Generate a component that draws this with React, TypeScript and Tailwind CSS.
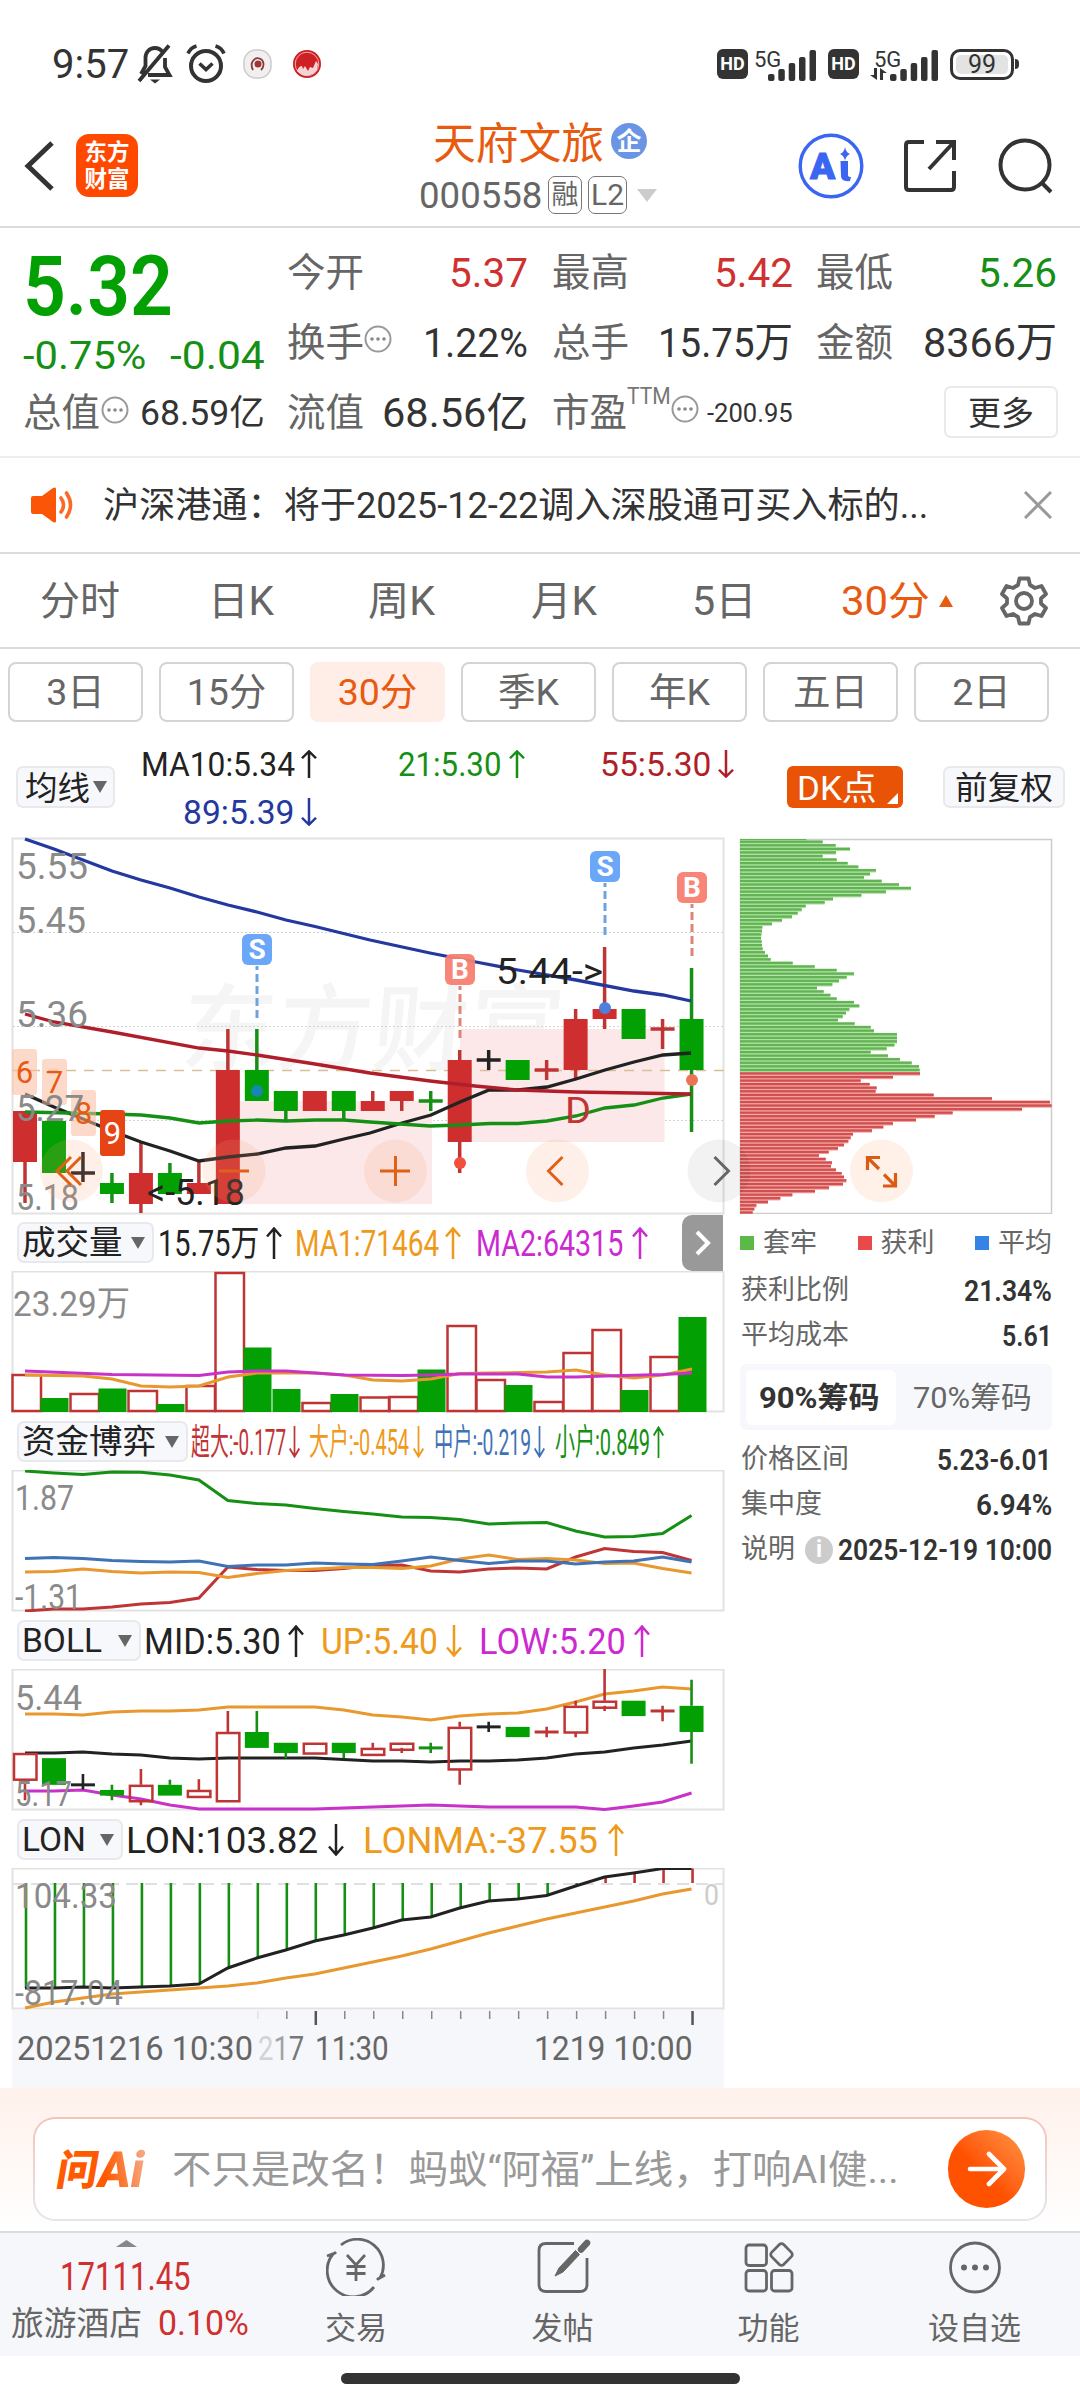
import React, { useLayoutEffect, useRef } from 'react';

const CANDLES = [
  { c: 'r', top: 1111, bot: 1162, hi: 1111, lo: 1203 },
  { c: 'g', top: 1121, bot: 1173, hi: 1121, lo: 1173 },
  { c: 'k', top: 1173, bot: 1173, hi: 1152, lo: 1182 },
  { c: 'g', top: 1183, bot: 1194, hi: 1173, lo: 1203 },
  { c: 'r', top: 1173, bot: 1204, hi: 1142, lo: 1213 },
  { c: 'g', top: 1173, bot: 1194, hi: 1163, lo: 1194 },
  { c: 'r', top: 1183, bot: 1194, hi: 1162, lo: 1194 },
  { c: 'r', top: 1070, bot: 1204, hi: 1029, lo: 1204 },
  { c: 'g', top: 1070, bot: 1101, hi: 1029, lo: 1101 },
  { c: 'g', top: 1091, bot: 1111, hi: 1091, lo: 1121 },
  { c: 'r', top: 1091, bot: 1111, hi: 1091, lo: 1111 },
  { c: 'g', top: 1091, bot: 1111, hi: 1091, lo: 1121 },
  { c: 'r', top: 1101, bot: 1111, hi: 1091, lo: 1111 },
  { c: 'r', top: 1091, bot: 1101, hi: 1091, lo: 1111 },
  { c: 'g', top: 1101, bot: 1101, hi: 1091, lo: 1111 },
  { c: 'r', top: 1060, bot: 1142, hi: 1050, lo: 1173 },
  { c: 'k', top: 1060, bot: 1060, hi: 1050, lo: 1070 },
  { c: 'g', top: 1060, bot: 1080, hi: 1060, lo: 1080 },
  { c: 'r', top: 1070, bot: 1070, hi: 1060, lo: 1080 },
  { c: 'r', top: 1019, bot: 1070, hi: 1009, lo: 1080 },
  { c: 'r', top: 1009, bot: 1019, hi: 947, lo: 1029 },
  { c: 'g', top: 1009, bot: 1039, hi: 1009, lo: 1039 },
  { c: 'r', top: 1029, bot: 1029, hi: 1019, lo: 1049 },
  { c: 'g', top: 1019, bot: 1070, hi: 968, lo: 1132 },
];

const COLORS: Record<string, string> = { r: '#cf2e2e', g: '#02a002', k: '#222222' };
const OUTLINE: Record<string, string> = { r: '#bf3535', g: '#159015', k: '#222222' };

const VOLUMES = [
  1374, 1398, 1393, 1388.5, 1390, 1404, 1385, 1272, 1347.5, 1389, 1402, 1394,
  1396.5, 1396, 1369.5, 1325, 1379, 1385, 1401, 1352, 1329, 1390, 1356, 1317,
];
const VOLUME_COLORS = 'rgrgrgrrggrgrrgrrgrrrgrg';

const FUND = {
  small: [1471, 1473, 1474.5, 1472, 1472.3, 1475, 1480, 1500.5, 1503.5, 1505, 1508.5, 1511.5, 1514, 1517, 1517.5, 1519.5, 1524, 1523, 1522.5, 1531, 1537, 1536.5, 1533.5, 1515.5],
  big: [1572, 1571.5, 1569, 1571.5, 1573, 1572, 1572.5, 1577.5, 1573.5, 1570.5, 1569, 1567.5, 1567.5, 1568.5, 1566, 1559, 1555, 1559.5, 1558.5, 1560, 1563.5, 1563, 1568.5, 1573],
  huge: [1611, 1609, 1609, 1607, 1604, 1602.5, 1598, 1567, 1569.5, 1570.5, 1570.5, 1568.5, 1565.5, 1565, 1571, 1572, 1569, 1568, 1569, 1557, 1548.5, 1551.5, 1552.5, 1560.5],
  mid: [1558.5, 1557.5, 1558.5, 1560.5, 1561.5, 1562, 1561, 1566.5, 1565, 1565, 1563, 1564, 1564.5, 1561, 1557, 1560.5, 1563.5, 1561, 1561, 1564, 1562, 1561, 1557, 1562],
};

const BOLL = {
  up: [1714, 1714, 1715, 1712, 1711, 1711, 1710, 1707, 1707, 1707, 1707, 1710, 1715, 1717, 1720, 1716, 1714, 1713, 1709, 1702, 1694, 1691, 1687, 1689],
  mid: [1753, 1753, 1752, 1754, 1755, 1758, 1759, 1758, 1758, 1758, 1758, 1759.5, 1761, 1761, 1762, 1761, 1761, 1760, 1758, 1754, 1752, 1748, 1745, 1741],
  low: [1791, 1791, 1790, 1795, 1799, 1805, 1809, 1809, 1809, 1809, 1809, 1808, 1807, 1806, 1805, 1806, 1807, 1807, 1807, 1807, 1809.5, 1806, 1802, 1793],
};

const LON = [1988, 1988, 1987, 1988, 1987, 1986, 1984, 1968, 1958, 1950, 1941, 1935, 1928, 1920, 1917, 1908, 1901, 1899, 1895.5, 1886, 1877, 1873, 1868.5, 1868.5];
const LONMA = [2008, 2002, 1998, 1994, 1992, 1990, 1988, 1986, 1983, 1978, 1974, 1968, 1962, 1956, 1949, 1941, 1933, 1926, 1919, 1913, 1907, 1901, 1894, 1889];

const CHIPS_GREEN = [
  259, 308, 347, 390, 348, 308, 350, 383, 415, 468, 450, 432, 485, 537, 573, 498, 424, 339, 314, 257, 245, 233,
  216, 186, 156, 127, 126, 124, 123, 125, 126, 128, 135, 144, 152, 218, 284, 350, 402, 380, 357, 337, 291, 311,
  331, 350, 402, 418, 388, 378, 368, 354, 404, 452, 462, 531, 531, 531, 523, 500, 452, 504, 540, 575, 597, 599,
];
const CHIPS_RED = [
  600, 519, 422, 449, 470, 467, 641, 816, 990, 995, 906, 698, 644, 588, 519, 490, 456, 399, 392, 385, 372, 354,
  326, 297, 317, 336, 333, 348, 365, 372, 379, 369, 327, 285, 217, 181, 144, 109, 103, 98,
];

const xAt = (i: number) => 25 + i * 28.98;
const series = (ys: number[]) => ys.map((y, i) => `${xAt(i)},${y}`).join(' ');

// Squeezes or stretches its text to the width of the box
function Fit({ className, children }: { className: string; children: React.ReactNode }) {
  const box = useRef<HTMLSpanElement>(null);
  const text = useRef<HTMLSpanElement>(null);

  useLayoutEffect(() => {
    if (!box.current || !text.current) return;
    text.current.style.transform = `scaleX(${box.current.offsetWidth / text.current.offsetWidth})`;
  }, []);

  return (
    <span ref={box} className={`inline-flex shrink-0 pt-[2px] leading-none ${className}`}>
      <span ref={text} className="inline-block shrink-0 origin-left whitespace-nowrap">{children}</span>
    </span>
  );
}

function Arrow({ down, className = 'h-8 w-4' }: { down?: boolean; className?: string }) {
  return (
    <svg className={`shrink-0 ${className}`} viewBox="0 0 16 32" fill="none" stroke="currentColor" strokeWidth="2.5" preserveAspectRatio="none">
      {down ? <path d="M8 0v30M1 22.500l7 8 7-8" /> : <path d="M8 32V2M1 9.500l7-8 7 8" />}
    </svg>
  );
}

function Label({ x, y, w, children, fill = '#8a8a8a', size = 37 }: { x: number; y: number; w: number; children: React.ReactNode; fill?: string; size?: number }) {
  return (
    <text x={x - 1} y={y} textLength={w + 2} lengthAdjust="spacingAndGlyphs" fontSize={size} fill={fill} stroke="none">{children}</text>
  );
}

function Frame({ y, h }: { y: number; h: number }) {
  return <rect x="12.500" y={y + 0.5} width="711" height={h} fill="none" stroke="#e2e2e2" strokeWidth="2" />;
}

function Dots({ className = '' }: { className?: string }) {
  return (
    <svg className={`h-7 w-7 shrink-0 ${className}`} viewBox="0 0 28 28">
      <circle cx="14" cy="14" r="12.500" fill="none" stroke="#999" strokeWidth="2" />
      <circle cx="8" cy="14" r="1.800" fill="#888" />
      <circle cx="14" cy="14" r="1.800" fill="#888" />
      <circle cx="20" cy="14" r="1.800" fill="#888" />
    </svg>
  );
}

function Signal() {
  return (
    <svg className="h-[31px] w-12 shrink-0" viewBox="0 0 48 31" fill="#333">
      <rect x="0" y="24" width="6.500" height="7" rx="2" />
      <rect x="10.300" y="19" width="6.500" height="12" rx="2" />
      <rect x="20.700" y="13" width="6.500" height="18" rx="2" />
      <rect x="31" y="7" width="6.500" height="24" rx="2" />
      <rect x="41.500" y="0" width="6.500" height="31" rx="2" />
    </svg>
  );
}

function StatusBar() {
  return (
    <div className="flex h-[116px] items-center pt-3 text-[#333]">
      <Fit className="ml-[52px] w-[77px] text-[40px]">9:57</Fit>
      <svg className="ml-[7px] h-[40px] w-[38px]" viewBox="0 0 38 40" fill="none" stroke="#333" strokeWidth="3.800">
        <path d="M27 8.500C24.500 5 22 4 19 4c-6 0-9.500 4.500-9.500 10v8L5 30M29 14v9l4.500 8H12M33 1.500L3 37" />
        <path d="M14 35.500h10l-5 4z" fill="#333" stroke="none" />
      </svg>
      <svg className="ml-[12px] h-[40px] w-[40px]" viewBox="0 0 40 40" fill="none" stroke="#333" strokeWidth="4">
        <circle cx="20" cy="22" r="15" />
        <path d="M2 9.500C4 5 7 3 10.500 2M38 9.500C36 5 33 3 29.500 2" strokeWidth="3.600" />
        <path d="M13.500 19.500l6.500 6 6.500-6" strokeWidth="3.600" />
      </svg>
      <svg className="ml-[17px] h-[30px] w-[29px]" viewBox="0 0 29 30">
        <rect x="1" y="1" width="27" height="28" rx="12" fill="#f1efef" stroke="#cfcaca" strokeWidth="1.500" />
        <path d="M10 21c-4-8 2-13 6.500-11.500S22 17 18 21" fill="none" stroke="#8c3a3a" strokeWidth="1.800" />
        <circle cx="15" cy="15" r="3.500" fill="#a03434" />
      </svg>
      <svg className="ml-[20px] h-[30px] w-[30px]" viewBox="0 0 30 30">
        <circle cx="15" cy="15" r="14" fill="#cd1f24" />
        <circle cx="15" cy="15" r="11.800" fill="none" stroke="#eeb0b0" strokeWidth="1" />
        <path d="M5 22c1-2 2-5 5-5l1 3 2-3 3 5 2-4 3 1 3-7 2 3-1 6c-4 6-13 8-20 1z" fill="#fff" opacity=".8" />
      </svg>
      <span className="ml-[395px] flex h-[30px] w-[31px] items-center justify-center rounded-[6px] bg-[#333] text-[18px] font-bold leading-none text-white">HD</span>
      <div className="ml-[6px] flex h-[34px] w-[63px]">
        <Fit className="w-[27px] text-[22px]">5G</Fit>
        <div className="-ml-[13px] mt-[3px]"><Signal /></div>
      </div>
      <span className="ml-[11px] flex h-[30px] w-[31px] items-center justify-center rounded-[6px] bg-[#333] text-[18px] font-bold leading-none text-white">HD</span>
      <div className="ml-[11px] flex h-[34px] w-[67px]">
        <div className="w-[30px]">
          <Fit className="ml-[4px] w-[27px] text-[22px]">5G</Fit>
          <svg className="-mt-[6px] h-[12px] w-[17px]" viewBox="0 0 17 12" fill="#333">
            <path d="M4 0h3v12L0 7h4zM10 12V0l7 5h-4v7z" />
          </svg>
        </div>
        <div className="-ml-[10px] mt-[3px]"><Signal /></div>
      </div>
      <div className="ml-[13px] flex h-[31px] w-[64px] items-center justify-center rounded-[10px] border-[3px] border-[#333] p-[3px]">
        <span className="flex h-full w-full items-center justify-center rounded-[5px] bg-[#e3e3e3] text-[25px] leading-none">99</span>
      </div>
      <span className="ml-[1px] h-[10px] w-[4px] rounded-r bg-[#333]" />
    </div>
  );
}

function Header() {
  return (
    <div className="flex h-[112px] items-center border-b-2 border-[#dcdcdc] pb-[11px]">
      <svg className="ml-[23px] h-[52px] w-[32px]" viewBox="0 0 32 52" fill="none" stroke="#333" strokeWidth="5">
        <path d="M29 3L5 26l24 23" />
      </svg>
      <div className="ml-[21px] flex h-[63px] w-[62px] flex-col items-center justify-center gap-[4px] rounded-[13px] bg-[#ff4800] text-[22.500px] font-bold leading-none text-white">
        <span>东方</span>
        <span>财富</span>
      </div>
      <div className="ml-[281px] flex w-[240px] flex-col pt-[7px]">
        <div className="flex h-[52px] items-center">
          <Fit className="ml-[14px] w-[171px] text-[43px] text-[#e85a10]">天府文旅</Fit>
          <span className="mb-[4px] ml-[7px] flex h-[36px] w-[36px] items-center justify-center rounded-full bg-[#6b95e4] text-[25px] font-bold leading-none text-white">企</span>
        </div>
        <div className="flex h-[52px] items-center text-[#666]">
          <Fit className="w-[123px] text-[36px]">000558</Fit>
          <span className="ml-[6px] flex h-[38px] w-[34px] items-center justify-center rounded-[7px] border-[1.500px] border-[#777] text-[27px] leading-none">融</span>
          <span className="ml-[6px] flex h-[38px] w-[39px] items-center justify-center rounded-[7px] border-[1.500px] border-[#777] text-[30px] leading-none">L2</span>
          <svg className="ml-[10px] h-[13px] w-[20px]" viewBox="0 0 20 13"><path d="M0 0h20L10 13z" fill="#ccc" /></svg>
        </div>
      </div>
      <svg className="ml-[139px] h-[66px] w-[66px]" viewBox="0 0 66 66">
        <circle cx="33" cy="33" r="30.800" fill="none" stroke="#3a66f2" strokeWidth="3.400" />
        <text x="12" y="46" fontSize="37" fontWeight="900" fill="#3a66f2" stroke="#3a66f2" strokeWidth="1">A</text>
        <path d="M42.500 28h7.500v14q0 2 3 2l-1 4q-9 1-9-5z" fill="#3a66f2" />
        <path d="M47 14q1 5.500 5 7-4 1.500-5 7-1-5.500-5-7 4-1.500 5-7z" fill="#3a66f2" />
      </svg>
      <svg className="ml-[38px] h-[56px] w-[56px]" viewBox="0 0 56 56" fill="none" stroke="#333" strokeWidth="4">
        <path d="M22 4H7q-3 0-3 3v42q0 3 3 3h42q3 0 3-3V33M34 4h18v18M52 4L27 31" />
      </svg>
      <svg className="ml-[40px] h-[56px] w-[56px]" viewBox="0 0 56 56" fill="none" stroke="#333" strokeWidth="4">
        <circle cx="27" cy="27" r="24.500" />
        <path d="M43 44l10 10" />
      </svg>
    </div>
  );
}

function Quote() {
  return (
    <div className="flex h-[230px] border-b-2 border-[#eee] pt-[10px] text-[41px] text-[#333]">
      <div className="ml-[23px] w-[242px]">
        <div className="flex h-[94px] items-center text-[#02a002]">
          <Fit className="w-[150px] text-[83px] font-semibold">5.32</Fit>
        </div>
        <div className="flex h-[46px] items-center justify-between text-[39px] text-[#159015]">
          <Fit className="w-[123px]">-0.75%</Fit>
          <Fit className="w-[95px]">-0.04</Fit>
        </div>
        <div className="flex h-[69px] items-center">
          <Fit className="w-[77px] text-[39px] text-[#666]">总值</Fit>
          <Dots className="ml-[1px] -mt-[6px]" />
          <Fit className="ml-[11px] w-[125px] text-[35px]">68.59亿</Fit>
        </div>
      </div>
      <div className="ml-[22px] grid h-[209px] w-[768px] grid-cols-[241px_241px_241px] grid-rows-3 gap-x-[23.500px]">
        <div className="flex items-center justify-between">
          <Fit className="w-[77px] text-[39px] text-[#666]">今开</Fit>
          <Fit className="w-[79px] text-[#cf3030]">5.37</Fit>
        </div>
        <div className="flex items-center justify-between">
          <Fit className="w-[77px] text-[39px] text-[#666]">最高</Fit>
          <Fit className="w-[79px] text-[#cf3030]">5.42</Fit>
        </div>
        <div className="flex items-center justify-between">
          <Fit className="w-[77px] text-[39px] text-[#666]">最低</Fit>
          <Fit className="w-[79px] text-[#159015]">5.26</Fit>
        </div>
        <div className="flex items-center">
          <Fit className="w-[77px] text-[39px] text-[#666]">换手</Fit>
          <Dots className="-mt-[6px]" />
          <Fit className="ml-auto w-[105px]">1.22%</Fit>
        </div>
        <div className="flex items-center justify-between">
          <Fit className="w-[77px] text-[39px] text-[#666]">总手</Fit>
          <Fit className="w-[135px]">15.75万</Fit>
        </div>
        <div className="flex items-center justify-between">
          <Fit className="w-[77px] text-[39px] text-[#666]">金额</Fit>
          <Fit className="w-[134px]">8366万</Fit>
        </div>
        <div className="flex items-center justify-between">
          <Fit className="w-[77px] text-[39px] text-[#666]">流值</Fit>
          <Fit className="w-[146px]">68.56亿</Fit>
        </div>
        <div className="flex items-center">
          <Fit className="w-[75px] text-[39px] text-[#666]">市盈</Fit>
          <Fit className="mb-[34px] w-[44px] text-[23px] text-[#777]">TTM</Fit>
          <Dots className="-mt-[6px]" />
          <Fit className="ml-auto w-[86px] text-[25px]">-200.95</Fit>
        </div>
        <div className="flex items-center justify-end">
          <div className="-mr-[1px] flex h-[52px] w-[114px] items-center justify-center rounded-[7px] border-2 border-[#eaeaea]">
            <Fit className="w-[66px] text-[33px]">更多</Fit>
          </div>
        </div>
      </div>
    </div>
  );
}

function Notice() {
  return (
    <div className="flex h-[96px] items-center border-b-2 border-[#dcdcdc]">
      <svg className="ml-[31px] h-[36px] w-[42px]" viewBox="0 0 42 36">
        <path d="M0 11q0-2 2-2h9L22 1q3-1.500 3 1v32q0 2.500-3 1l-11-8H2q-2 0-2-2z" fill="#fb5607" />
        <path d="M30 11q5 7 0 14M35.500 6q8 12 0 24" fill="none" stroke="#fb6a25" strokeWidth="3.600" strokeLinecap="round" />
      </svg>
      <Fit className="ml-[30px] w-[825px] text-[36px] text-[#333]">沪深港通：将于2025-12-22调入深股通可买入标的...</Fit>
      <svg className="ml-[96px] h-[28px] w-[28px]" viewBox="0 0 28 28" fill="none" stroke="#999" strokeWidth="3">
        <path d="M1 1l26 26M27 1L1 27" />
      </svg>
    </div>
  );
}

function Tabs() {
  return (
    <div className="flex h-[95px] items-center border-b-2 border-[#dcdcdc] text-[40px] text-[#666]">
      <Fit className="ml-[40px] w-[80px]">分时</Fit>
      <Fit className="ml-[88px] w-[66px]">日K</Fit>
      <Fit className="ml-[94px] w-[67px]">周K</Fit>
      <Fit className="ml-[96px] w-[66px]">月K</Fit>
      <Fit className="ml-[95px] w-[64px]">5日</Fit>
      <Fit className="ml-[85px] w-[89px] text-[#e85a10]">30分</Fit>
      <svg className="ml-[9px] h-[12px] w-[14px]" viewBox="0 0 14 12"><path d="M7 0l7 12H0z" fill="#e85a10" /></svg>
      <svg className="ml-[46px] h-[50px] w-[50px]" viewBox="0 0 50 50" fill="none" stroke="#666" strokeWidth="3.800" strokeLinejoin="round">
        <path d="M20.500 2.500h9l1.500 6.500 5 3 6.500-2 4.500 8-5 4.500v5l5 4.500-4.500 8-6.500-2-5 3-1.500 6.500h-9L19 41l-5-3-6.500 2L3 32l5-4.500v-5L3 18l4.500-8 6.500 2 5-3z" />
        <circle cx="25" cy="25" r="8" />
      </svg>
    </div>
  );
}

function Periods() {
  const box = 'flex h-[60px] w-[135px] items-center justify-center rounded-[8px] pt-[2px] text-[37.500px] leading-none';
  return (
    <div className="flex gap-x-[16px] pl-[8px] pt-[13px]">
      {['3日', '15分', '30分', '季K', '年K', '五日', '2日'].map(name => (
        <div
          key={name}
          className={name === '30分' ? `${box} bg-[#feeee7] text-[#e85a10]` : `${box} border-2 border-[#d4d4d4] text-[#666]`}
        >
          {name}
        </div>
      ))}
    </div>
  );
}

function MaBar() {
  return (
    <div className="flex h-[116px] items-center pt-[14px] text-[#222]">
      <div className="ml-[16px] flex h-[42px] w-[99px] items-center rounded-[7px] border-2 border-[#e8e9ed] bg-[#f7f8fb]">
        <Fit className="ml-[7px] w-[65px] text-[33px]">均线</Fit>
        <svg className="ml-[3px] h-[12px] w-[14px]" viewBox="0 0 14 12"><path d="M0 0h14L7 12z" fill="#666" /></svg>
      </div>
      <div className="ml-[26px] w-[646px] pt-[1px] text-[33px]">
        <div className="flex h-[48px] items-center">
          <Fit className="w-[154px]">MA10:5.34</Fit>
          <Arrow className="ml-[6px] h-7 w-4" />
          <Fit className="ml-[81px] w-[103px] text-[#159015]">21:5.30</Fit>
          <span className="ml-[8px] flex text-[#159015]"><Arrow className="h-7 w-4" /></span>
          <Fit className="ml-[75px] w-[111px] text-[#b01e2a]">55:5.30</Fit>
          <span className="ml-[7px] flex text-[#b01e2a]"><Arrow down className="h-7 w-4" /></span>
        </div>
        <div className="flex h-[48px] items-center pl-[42px] text-[#2438a0]">
          <Fit className="w-[111px]">89:5.39</Fit>
          <Arrow down className="ml-[7px] h-7 w-4" />
        </div>
      </div>
      <div className="flex h-[42px] w-[116px] items-center rounded-[6px] bg-[#e85305] text-white">
        <Fit className="ml-[10px] w-[80px] text-[34px]">DK点</Fit>
        <svg className="ml-[10px] mt-[22px] h-[11px] w-[11px]" viewBox="0 0 11 11"><path d="M11 0v11H0z" fill="#fff" /></svg>
      </div>
      <div className="ml-[40px] flex h-[42px] w-[122px] items-center justify-center rounded-[7px] border-2 border-[#e8e9ed] bg-[#f7f8fb]">
        <Fit className="w-[98px] text-[32px]">前复权</Fit>
      </div>
    </div>
  );
}

function Signpost({ x, y, name }: { x: number; y: number; name: 'S' | 'B' }) {
  const isSell = name === 'S';
  return (
    <g>
      <rect x={x - 15} y={y} width="30" height="31" rx="6" fill={isSell ? '#62a2f8' : '#f77f72'} opacity="0.95" />
      <text x={x} y={y + 25} textAnchor="middle" fontSize="28" fontWeight="700" fill="#fff">{name}</text>
      <path d={`M${x} ${y + 32}v52`} stroke={isSell ? '#6fa3dc' : '#e08478'} strokeWidth="3" strokeDasharray="8 4" strokeDashoffset="4" />
    </g>
  );
}

function NineTurn({ x, y, n }: { x: number; y: number; n: number }) {
  return (
    <g>
      <rect x={x} y={y} width="25" height="46" rx="3" fill={n === 9 ? '#e64414' : '#fbb99f'} opacity={n === 9 ? 1 : 0.55} />
      <text x={x + 12.5} y={y + 34} textAnchor="middle" fontSize="31" fill={n === 9 ? '#fff' : '#e85a10'}>{n}</text>
    </g>
  );
}

function MainChart() {
  return (
    <svg className="relative z-10 h-[376px] w-[735px] overflow-visible" viewBox="0 838 735 376" fill="none">
      <text x="176" y="1063" textLength="382" fontSize="95" fontWeight="500" fill="#f5f5f5" transform="skewX(-5) translate(96 0)">东方财富</text>
      <Frame y={838} h={375} />
      <g stroke="#d4d4d4" strokeWidth="1" strokeDasharray="2 2">
        <path d="M13 932.500h710M13 1026.500h710M13 1120.500h710" />
      </g>
      <rect x="240" y="1101" width="192" height="103" fill="#fce8e8" />
      <rect x="460" y="1029" width="204.500" height="113" fill="#fce8e8" />
      <path d="M12 1070.500h712" stroke="#d9bf98" strokeWidth="1.500" strokeDasharray="10 8" />
      {CANDLES.map((k, i) => (
        <g key={i}>
          <path d={`M${xAt(i)} ${k.hi}V${k.lo}`} stroke={OUTLINE[k.c]} strokeWidth="3.500" />
          {k.top === k.bot
            ? <path d={`M${xAt(i) - 12} ${k.top}h24`} stroke={OUTLINE[k.c]} strokeWidth="3.500" />
            : <rect x={xAt(i) - 12} y={k.top} width="24" height={k.bot - k.top} fill={COLORS[k.c]} />}
        </g>
      ))}
      <g strokeWidth="3.300">
        <polyline stroke="#2438a0" points="25,839 54,849 83,860 112,871 141,880 170,888 199,897 228,905 257,912 286,920 315,926.5 370,940 430,953 476,962 518,970 576,980 634,991 663,995 691,1001" />
        <polyline stroke="#222" points="25,1094 54,1107 83,1119 112,1131 141,1142 170,1151 199,1161 228,1157 257,1154 286,1148 315,1146 344,1139 370,1133 402,1123 431,1115 460,1102 489,1090 518,1090 547,1087 576,1079 605,1070 634,1062 663,1055 691,1053" />
        <polyline stroke="#159015" points="25,1112 112,1114 141,1115 170,1118 199,1123 228,1121 257,1120 286,1121 315,1120 344,1120 370,1122 430,1126 460,1125 490,1123.5 518,1123.5 547,1121 576,1116 605,1108 634,1105 663,1098 691,1094" />
        <polyline stroke="#b01e2a" points="25,1014 54,1022 112,1032 199,1048 228,1051 257,1055 315,1064 370,1073 430,1081 475,1086 518,1090 576,1092 691,1094" />
      </g>
      <Signpost x={257} y={934} name="S" />
      <Signpost x={605} y={851} name="S" />
      <Signpost x={460} y={954} name="B" />
      <Signpost x={692} y={872} name="B" />
      <circle cx="257" cy="1091" r="6" fill="#1787b0" />
      <circle cx="605" cy="1008" r="6" fill="#4d80dd" />
      <circle cx="460" cy="1163" r="6" fill="#f2503c" />
      <circle cx="692" cy="1080" r="6" fill="#ec7355" />
      <NineTurn x={12} y={1049} n={6} />
      <NineTurn x={42} y={1059} n={7} />
      <NineTurn x={71} y={1090} n={8} />
      {[5.55, 5.45, 5.36, 5.27, 5.18].map((v, i) => (
        <Label key={v} x={17} y={[879, 933, 1027, 1121, 1210][i]} w={[70, 68, 70, 66, 61][i]}>{v.toFixed(2)}</Label>
      ))}
      <NineTurn x={100} y={1110} n={9} />
      <Label x={566} y={1123} w={24} fill="#bf3535">D</Label>
      <Label x={497} y={984} w={105} fill="#222">5.44-&gt;</Label>
      <Label x={148} y={1205} w={96} fill="#222">&lt;-5.18</Label>
      <g fill="#f7a072" fillOpacity="0.16">
        <circle cx="71.500" cy="1171" r="31.500" />
        <circle cx="234" cy="1171" r="31.500" />
        <circle cx="395.500" cy="1171" r="31.500" />
        <circle cx="557.500" cy="1171" r="31.500" />
      </g>
      <circle cx="719" cy="1171" r="31.500" fill="#000" fillOpacity="0.05" />
      <g stroke="#e06018" strokeWidth="3">
        <path d="M71 1157l-14 14 14 14M81 1157l-14 14 14 14" />
        <path d="M219 1171h30M380 1171h30M395.500 1156v30" />
        <path d="M562.500 1157l-14 14 14 14" />
      </g>
      <path d="M714.500 1157l14 14-14 14" stroke="#666" strokeWidth="3" />
    </svg>
  );
}

function IndicatorHead({ name, width, children }: { name: string; width: string; children: React.ReactNode }) {
  return (
    <div className="flex h-[57px] items-center text-[36px] text-[#222]">
      <div className={`ml-[17px] flex h-[41px] items-center justify-between rounded-[7px] border-2 border-[#e8e9ed] bg-[#f7f8fb] pl-[3px] pr-[7px] ${width}`}>
        <span className="whitespace-nowrap pt-[1px] text-[33.500px] leading-none">{name}</span>
        <svg className="h-[12px] w-[14px] shrink-0" viewBox="0 0 14 12"><path d="M0 0h14L7 12z" fill="#666" /></svg>
      </div>
      {children}
    </div>
  );
}

function VolumeChart() {
  return (
    <svg className="h-[142px] w-[735px]" viewBox="0 1271 735 142" fill="none">
      <Frame y={1271} h={140} />
      <Label x={14} y={1316} w={115} size={35}>23.29万</Label>
      {VOLUMES.map((top, i) => VOLUME_COLORS[i] === 'g'
        ? <rect key={i} x={12 + i * 29 - 0.5} y={top} width="28" height={1412 - top} fill="#02a002" />
        : <rect key={i} x={12 + i * 29 + 0.5} y={top + 1} width="28.500" height={1410 - top} fill="#fff" stroke="#bf3535" strokeWidth="2.500" />)}
      <polyline stroke="#e8982e" strokeWidth="3" points="25,1375 83,1376 112,1379 141,1386 170,1387 199,1386 228,1377 257,1373 286,1373 315,1373 344,1375 373,1380 402,1381 431,1379 460,1373.5 489,1373 547,1372 576,1370 605,1375 634,1378 663,1375 692,1369" />
      <polyline stroke="#c832c8" strokeWidth="3" points="25,1371 112,1374.5 199,1375.5 228,1372 257,1371 286,1371 315,1373 344,1375 402,1375.5 431,1375 460,1374 518,1374 547,1377 576,1377 605,1376 663,1374.5 692,1373" />
    </svg>
  );
}

function FundChart() {
  return (
    <svg className="h-[142px] w-[735px]" viewBox="0 1470 735 142" fill="none" strokeWidth="3">
      <Frame y={1470} h={140} />
      <polyline stroke="#159015" points={series(FUND.small)} />
      <polyline stroke="#bf3535" points={series(FUND.huge)} />
      <polyline stroke="#e8982e" points={series(FUND.big)} />
      <polyline stroke="#3f73b5" points={series(FUND.mid)} />
      <Label x={16} y={1510} w={57} size={35}>1.87</Label>
      <Label x={16} y={1608.5} w={65} size={35}>-1.31</Label>
    </svg>
  );
}

function BollChart() {
  const scale = (y: number) => 1732 + (y - 1070) * 0.513;
  return (
    <svg className="h-[142px] w-[735px]" viewBox="0 1669 735 142" fill="none" strokeWidth="3">
      <Frame y={1669} h={140} />
      <polyline stroke="#e8982e" points={series(BOLL.up)} />
      <polyline stroke="#222" points={series(BOLL.mid)} />
      <polyline stroke="#c832c8" points={series(BOLL.low)} />
      {CANDLES.map((k, i) => {
        const top = scale(k.top);
        const bot = scale(k.bot);
        return (
          <g key={i} stroke={OUTLINE[k.c]}>
            <path d={`M${xAt(i)} ${scale(k.hi)}V${top}M${xAt(i)} ${bot}V${scale(k.lo)}`} strokeWidth="2.600" />
            {k.top === k.bot && <path d={`M${xAt(i) - 12} ${top}h24`} />}
            {k.top !== k.bot && k.c === 'g' && <rect x={xAt(i) - 12} y={top} width="24" height={bot - top} fill="#02a002" stroke="none" />}
            {k.top !== k.bot && k.c === 'r' && <rect x={xAt(i) - 11} y={top + 1} width="22.500" height={Math.max(bot - top - 0.5, 6)} fill="none" strokeWidth="2.500" />}
          </g>
        );
      })}
      <Label x={16} y={1710} w={65} size={35}>5.44</Label>
      <Label x={16} y={1806} w={55} size={35}>5.17</Label>
    </svg>
  );
}

function LonChart() {
  return (
    <svg className="h-[142px] w-[735px]" viewBox="0 1868 735 142" fill="none" strokeWidth="3">
      <Frame y={1868} h={140} />
      <path d="M12 1884h712" stroke="#e0e0e0" strokeWidth="1.800" strokeDasharray="12 7" />
      <Label x={705} y={1905} w={13} size={30} fill="#ccc">0</Label>
      {LON.map((y, i) => (
        <path key={i} d={`M${xAt(i) + 1} 1883V${y}`} stroke={y > 1884 ? '#159015' : '#bf3535'} strokeWidth="2.600" />
      ))}
      <polyline stroke="#222" points={series(LON)} />
      <polyline stroke="#e8982e" points={series(LONMA)} />
      <Label x={16} y={1908} w={100} size={35}>104.33</Label>
      <Label x={16} y={2005} w={106} size={35}>-817.04</Label>
    </svg>
  );
}

function TimeAxis() {
  return (
    <div className="ml-[12px] h-[78px] w-[712px] bg-[#f6f7fa]">
      <svg className="h-[16px] w-[712px]" viewBox="12 2010 712 16" stroke="#888" strokeWidth="1.500">
        {Array.from({ length: 16 }, (_, i) => i + 8).map(i => (
          i === 10 || i === 23
            ? <path key={i} d={`M${xAt(i) + 1} 2011v14`} stroke="#555" strokeWidth="2.500" />
            : <path key={i} d={`M${xAt(i) + 1} 2011v8`} opacity={i === 8 ? 0.2 : 1} />
        ))}
      </svg>
      <div className="flex h-[42px] items-center text-[34px] text-[#666]">
        <Fit className="ml-[5px] w-[236px]">20251216 10:30</Fit>
        <Fit className="ml-[5px] w-[46px]">
          <span className="text-[#d2d2d4]">2</span>
          <span className="text-[#a2a2a4]">1</span>
          <span className="text-[#777]">7</span>
        </Fit>
        <Fit className="ml-[11px] w-[74px]">11:30</Fit>
        <Fit className="ml-[145px] w-[159px]">1219 10:00</Fit>
      </div>
    </div>
  );
}

function ChipChart() {
  return (
    <svg className="-ml-[2px] h-[376px] w-[316px]" viewBox="738 838 316 376" fill="none">
      <rect x="740.500" y="839.500" width="311" height="374" stroke="#ccc" strokeWidth="1.500" />
      {[...CHIPS_GREEN, ...CHIPS_RED].map((end, i) => {
        const red = i >= CHIPS_GREEN.length;
        return (
          <g key={i}>
            <rect x="740" y={i === 0 ? 839 : 836.8 + i * 3.565} width={(end - 60) / 3} height={i === 0 ? 1.4 : 3.565} fill={red ? '#f6a09c' : '#a9e29b'} />
            <rect x="740" y={i === 0 ? 839 : 837 + i * 3.565} width={(end - 60) / 3} height={i === 0 ? 1 : 2.3} fill={red ? '#cf5050' : '#63b255'} />
          </g>
        );
      })}
      <circle cx="881.500" cy="1171" r="31.500" fill="#fff0e8" />
      <path d="M879 1169l-11-11M867.500 1170v-12.500h12.500M884 1174.500l11 11M895.500 1173v13H883" stroke="#dc5a14" strokeWidth="3.200" />
    </svg>
  );
}

function ChipPanel() {
  return (
    <div className="ml-[5px] w-[312px] text-[27px] leading-none text-[#666]">
      <ChipChart />
      <div className="flex h-[53px] items-center justify-between pt-[4px]">
        <div className="flex items-center gap-[9px]">
          <span className="h-[14px] w-[14px] bg-[#5bb947]" />
          <Fit className="w-[54px]">套牢</Fit>
        </div>
        <div className="flex items-center gap-[9px]">
          <span className="h-[14px] w-[14px] bg-[#e84a4a]" />
          <Fit className="w-[54px]">获利</Fit>
        </div>
        <div className="flex items-center gap-[9px]">
          <span className="h-[14px] w-[14px] bg-[#3583e4]" />
          <Fit className="w-[54px]">平均</Fit>
        </div>
      </div>
      <div className="flex h-[45px] items-center justify-between pl-[1px] pt-[2px]">
        <span>获利比例</span>
        <Fit className="w-[88px] text-[29px] font-semibold text-[#333]">21.34%</Fit>
      </div>
      <div className="flex h-[45px] items-center justify-between pl-[1px] pt-[2px]">
        <span>平均成本</span>
        <Fit className="w-[50px] text-[29px] font-semibold text-[#333]">5.61</Fit>
      </div>
      <div className="mt-[7px] flex h-[66px] items-center rounded-[6px] bg-[#f7f8fb] px-[6px]">
        <div className="flex h-[55px] w-[150px] items-center justify-center rounded-[6px] bg-white">
          <Fit className="mr-[4px] w-[121px] text-[30px] font-bold text-[#333]">90%筹码</Fit>
        </div>
        <Fit className="ml-[17px] w-[119px] text-[30px]">70%筹码</Fit>
      </div>
      <div className="mt-[6px] flex h-[45px] items-center justify-between pl-[1px] pt-[2px]">
        <span>价格区间</span>
        <Fit className="w-[115px] text-[29px] font-semibold text-[#333]">5.23-6.01</Fit>
      </div>
      <div className="flex h-[45px] items-center justify-between pl-[1px] pt-[2px]">
        <span>集中度</span>
        <Fit className="w-[76px] text-[29px] font-semibold text-[#333]">6.94%</Fit>
      </div>
      <div className="flex h-[45px] items-center pl-[1px] pt-[2px]">
        <span>说明</span>
        <span className="ml-[10px] flex h-[28px] w-[28px] items-center justify-center rounded-full bg-[#ccc] text-[23px] font-bold leading-none text-white">i</span>
        <Fit className="ml-auto w-[214px] text-[29px] font-semibold text-[#333]">2025-12-19 10:00</Fit>
      </div>
    </div>
  );
}

function AskBar() {
  return (
    <div className="flex h-[143px] items-start bg-gradient-to-b from-[#fff1eb] to-white px-[33px] pt-[29px]">
      <div className="h-[104px] w-[1014px] rounded-[22px] bg-gradient-to-b from-[#f5c3b8] to-[#e2e7ee] p-[2px]">
        <div className="flex h-full items-center rounded-[20px] bg-white">
          <svg className="ml-[18px] h-[50px] w-[92px]" viewBox="0 0 92 50">
            <defs>
              <linearGradient id="ask" gradientUnits="userSpaceOnUse" x1="0" y1="40" x2="92" y2="10">
                <stop offset="0.6" stopColor="#ff5a00" />
                <stop offset="1" stopColor="#f5a880" />
              </linearGradient>
            </defs>
            <g fill="url(#ask)" fontWeight="900" transform="skewX(-10)">
              <text x="9" y="41" fontSize="42" textLength="41" lengthAdjust="spacingAndGlyphs">问</text>
              <text x="50" y="43" fontSize="50" textLength="46" lengthAdjust="spacingAndGlyphs">Ai</text>
            </g>
          </svg>
          <Fit className="ml-[27px] w-[727px] text-[39px] text-[#999]">不只是改名！蚂蚁“阿福”上线，打响AI健...</Fit>
          <span className="ml-[49px] flex h-[78px] w-[77px] items-center justify-center rounded-full bg-gradient-to-tr from-[#ff5200] from-45% to-[#ff9440]">
            <svg className="h-[36px] w-[42px]" viewBox="0 0 42 36" fill="none" stroke="#fff" strokeWidth="4.600" strokeLinecap="round" strokeLinejoin="round">
              <path d="M4 18h34M23 3l15 15-15 15" />
            </svg>
          </span>
        </div>
      </div>
    </div>
  );
}

function BottomNav() {
  return (
    <div className="flex h-[125px] border-t-2 border-[#d9dde0] bg-[#f6f7fa] text-[31px] leading-none text-[#666]">
      <div className="flex w-[253px] flex-col">
        <svg className="ml-[116px] mt-[7px] h-[7px] w-[21px]" viewBox="0 0 21 7"><path d="M10.500 0L21 7H0z" fill="#888" /></svg>
        <Fit className="ml-[60px] mt-[9px] w-[131px] text-[38px] text-[#cf3030]">17111.45</Fit>
        <div className="mt-[8px] flex items-center">
          <Fit className="ml-[11px] w-[131px] text-[33px]">旅游酒店</Fit>
          <Fit className="ml-[16px] w-[91px] text-[35px] text-[#cf3030]">0.10%</Fit>
        </div>
      </div>
      <div className="flex w-[206px] flex-col items-center gap-[17px] pt-[5px]">
        <svg className="h-[58px] w-[60px]" viewBox="0 0 60 58" fill="none" stroke="#666" strokeWidth="2.800">
          <path d="M15 7a26 26 0 0 1 39 33M48 49A26 26 0 0 1 7 16M1 18l8-3 1-1M59 37l-7 4-1-1" />
          <path d="M21 17l9 10 9-10M30 27v16M20.500 28.500h19M20.500 35.500h19" />
        </svg>
        <span>交易</span>
      </div>
      <div className="flex w-[207px] flex-col items-center gap-[17px] pt-[5px]">
        <svg className="h-[58px] w-[60px]" viewBox="0 0 60 58" fill="none" stroke="#666" strokeWidth="2.800">
          <path d="M41 5.500H13q-7 0-7 7v34q0 7 7 7h34q7 0 7-7V20" />
          <path d="M54 5l-6 6.500" strokeWidth="6.500" strokeLinecap="round" />
          <path d="M42.500 12.500l4 4L30 34l-8 4 4-8z" fill="#666" strokeWidth="1" />
        </svg>
        <span>发帖</span>
      </div>
      <div className="flex w-[205px] flex-col items-center gap-[17px] pt-[5px]">
        <svg className="h-[58px] w-[60px]" viewBox="0 0 60 58" fill="none" stroke="#666" strokeWidth="2.800">
          <rect x="7" y="7" width="20.500" height="20.500" rx="3" />
          <rect x="7" y="32.500" width="20.500" height="20.500" rx="3" />
          <rect x="32.500" y="32.500" width="20.500" height="20.500" rx="3" />
          <rect x="34" y="8" width="17" height="17" rx="3" transform="rotate(45 42.500 16.500)" />
        </svg>
        <span>功能</span>
      </div>
      <div className="flex w-[207px] flex-col items-center gap-[17px] pt-[5px]">
        <svg className="h-[58px] w-[60px]" viewBox="0 0 60 58" fill="#666">
          <circle cx="30" cy="29.500" r="24.500" fill="none" stroke="#666" strokeWidth="2.800" />
          <circle cx="19" cy="29.500" r="3" />
          <circle cx="30" cy="29.500" r="3" />
          <circle cx="41" cy="29.500" r="3" />
        </svg>
        <span>设自选</span>
      </div>
    </div>
  );
}

export default function App() {
  return (
    <div className="h-[2400px] w-[1080px] overflow-hidden bg-white font-[Roboto,'Noto_Sans_CJK_SC',sans-serif]">
      <StatusBar />
      <Header />
      <Quote />
      <Notice />
      <Tabs />
      <Periods />
      <MaBar />
      <div className="flex h-[1250px]">
        <div className="flex w-[735px] flex-col">
          <MainChart />
          <IndicatorHead name="成交量" width="w-[137px]">
            <Fit className="ml-[4px] w-[101px]">15.75万</Fit>
            <Arrow className="ml-[7px] h-8 w-4" />
            <Fit className="ml-[13px] w-[144px] text-[#ee9a1c]">MA1:71464</Fit>
            <span className="ml-[6px] flex text-[#ee9a1c]"><Arrow /></span>
            <Fit className="ml-[15px] w-[147px] text-[#cc2ad0]">MA2:64315</Fit>
            <span className="ml-[9px] flex text-[#cc2ad0]"><Arrow /></span>
            <div className="ml-[34px] flex h-[56px] w-[41px] items-center justify-center rounded-l-[10px] bg-[#999]">
              <svg className="h-[26px] w-[16px]" viewBox="0 0 16 26" fill="none" stroke="#fff" strokeWidth="4"><path d="M2 2l11 11L2 24" /></svg>
            </div>
          </IndicatorHead>
          <VolumeChart />
          <IndicatorHead name="资金博弈" width="w-[171px]">
            <Fit className="ml-[3px] w-[95px] text-[#bf3535]">超大:-0.177</Fit>
            <span className="ml-[3px] flex text-[#bf3535]"><Arrow down className="h-8 w-[11px]" /></span>
            <Fit className="ml-[9px] w-[100px] text-[#ee9a1c]">大户:-0.454</Fit>
            <span className="ml-[4px] flex text-[#ee9a1c]"><Arrow down className="h-8 w-[11px]" /></span>
            <Fit className="ml-[10px] w-[97px] text-[#3f73b5]">中户:-0.219</Fit>
            <span className="ml-[3px] flex text-[#3f73b5]"><Arrow down className="h-8 w-[11px]" /></span>
            <Fit className="ml-[10px] w-[95px] text-[#159015]">小户:0.849</Fit>
            <span className="ml-[3px] flex text-[#159015]"><Arrow className="h-8 w-[11px]" /></span>
          </IndicatorHead>
          <FundChart />
          <IndicatorHead name="BOLL" width="w-[124px]">
            <Fit className="ml-[3px] w-[137px]">MID:5.30</Fit>
            <Arrow className="ml-[7px] h-8 w-4" />
            <Fit className="ml-[17px] w-[117px] text-[#ee9a1c]">UP:5.40</Fit>
            <span className="ml-[8px] flex text-[#ee9a1c]"><Arrow down /></span>
            <Fit className="ml-[17px] w-[147px] text-[#cc2ad0]">LOW:5.20</Fit>
            <span className="ml-[8px] flex text-[#cc2ad0]"><Arrow /></span>
          </IndicatorHead>
          <BollChart />
          <IndicatorHead name="LON" width="w-[106px]">
            <Fit className="ml-[3px] w-[192px]">LON:103.82</Fit>
            <Arrow down className="ml-[10px] h-8 w-4" />
            <Fit className="ml-[19px] w-[235px] text-[#ee9a1c]">LONMA:-37.55</Fit>
            <span className="ml-[10px] flex text-[#ee9a1c]"><Arrow /></span>
          </IndicatorHead>
          <LonChart />
          <TimeAxis />
        </div>
        <ChipPanel />
      </div>
      <AskBar />
      <BottomNav />
      <div className="mx-auto mt-[17px] h-[11px] w-[399px] rounded-full bg-[#333]" />
    </div>
  );
}
